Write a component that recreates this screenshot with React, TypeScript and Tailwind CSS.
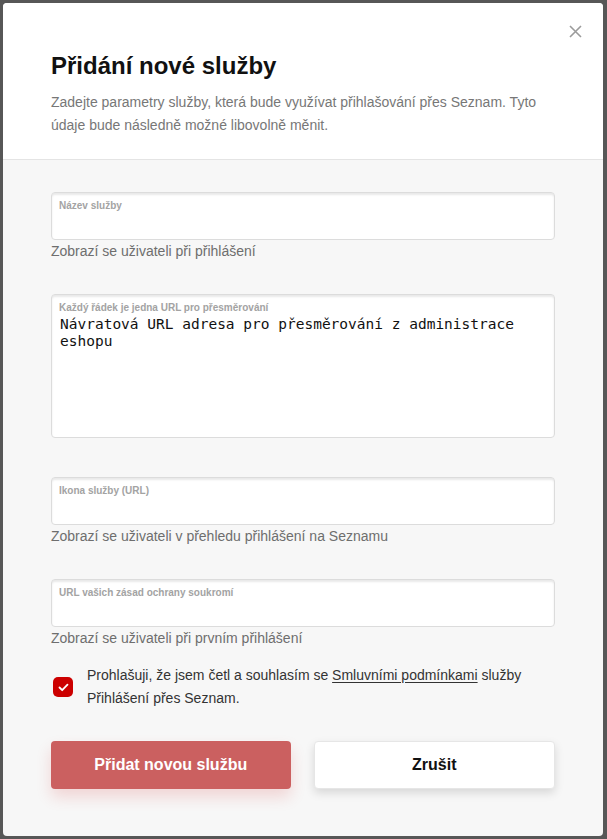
import React from "react";

const sans = "font-['Liberation_Sans',Arial,sans-serif]";

function Field({ label, helper }: { label: string; helper?: string }) {
  return (
    <div className="flex flex-col">
      <div className="h-[48px] rounded-[4px] border border-[#dcdcdc] bg-white px-[7px] pt-[6px] shadow-[inset_0_2px_2px_rgba(0,0,0,0.09)]">
        <div className="text-[10px] font-bold leading-[14px] text-[#a3a3a3]">{label}</div>
      </div>
      {helper && (
        <div className="mt-[1px] text-[14px] leading-[20px] text-[#6e6e6e]">{helper}</div>
      )}
    </div>
  );
}

export default function App() {
  return (
    <div className={`h-[839px] w-[607px] overflow-hidden bg-[#575757] pl-[3px] pt-[3px] ${sans}`}>
      <div className="flex h-[833px] w-[600px] flex-col overflow-hidden rounded-[4px] bg-[#f7f7f7]">
        {/* Header */}
        <div className="relative border-b border-[#e4e4e4] bg-white px-[48px] pt-[49px] pb-[22px]">
          <button className="absolute right-[19px] top-[19px] flex h-[18px] w-[18px] items-center justify-center">
            <svg width="13" height="13" viewBox="0 0 13 13">
              <path d="M1 1 L12 12 M12 1 L1 12" stroke="#9b9b9b" strokeWidth="1.6" fill="none" />
            </svg>
          </button>
          <h1 className="text-[24px] font-bold leading-[28px] text-[#111]">Přidání nové služby</h1>
          <p className="mt-[11px] text-[14px] leading-[23px] text-[#777]">
            Zadejte parametry služby, která bude využívat přihlašování přes Seznam. Tyto
            <br />
            údaje bude následně možné libovolně měnit.
          </p>
        </div>

        {/* Body */}
        <div className="flex flex-1 flex-col px-[48px] pt-[32px]">
          <Field label="Název služby" helper="Zobrazí se uživateli při přihlášení" />

          <div className="mt-[33px] h-[144px] rounded-[4px] border border-[#dcdcdc] bg-white px-[7px] pt-[6px] shadow-[inset_0_2px_2px_rgba(0,0,0,0.09)]">
            <div className="text-[10px] font-bold leading-[14px] text-[#a3a3a3]">
              Každý řádek je jedna URL pro přesměrování
            </div>
            <div className="mt-[1px] pl-[1px] font-['DejaVu_Sans_Mono','Liberation_Mono',monospace] text-[14.5px] leading-[17px] text-[#111]">
              Návratová URL adresa pro přesměrování z administrace
              <br />
              eshopu
            </div>
          </div>

          <div className="mt-[39px]">
            <Field label="Ikona služby (URL)" helper="Zobrazí se uživateli v přehledu přihlášení na Seznamu" />
          </div>

          <div className="mt-[33px]">
            <Field label="URL vašich zásad ochrany soukromí" helper="Zobrazí se uživateli při prvním přihlášení" />
          </div>

          <div className="mt-[16px] flex items-center gap-[14px] pl-[2px]">
            <div className="flex h-[20px] w-[20px] shrink-0 items-center justify-center rounded-[5px] bg-[#cc0000]">
              <svg width="11" height="9" viewBox="0 0 11 9">
                <path d="M1.5 4.5 L4.2 7.2 L9.5 1.6" stroke="#fff" strokeWidth="1.8" fill="none" strokeLinecap="round" strokeLinejoin="round" />
              </svg>
            </div>
            <p className="text-[14px] leading-[23px] text-[#333]">
              Prohlašuji, že jsem četl a souhlasím se{" "}
              <span className="underline underline-offset-[2px]">Smluvními podmínkami</span> služby
              <br />
              Přihlášení přes Seznam.
            </p>
          </div>

          <div className="mt-[31px] flex gap-[23px]">
            <button className="flex h-[48px] w-[240px] items-center justify-center rounded-[4px] bg-[#cb6060] text-[16px] font-bold text-white shadow-[0_8px_16px_rgba(204,0,0,0.14)]">
              Přidat novou službu
            </button>
            <button className="flex h-[48px] w-[242px] items-center justify-center rounded-[4px] border border-[#e6e6e6] bg-white text-[16px] font-bold text-[#111] shadow-[0_4px_10px_rgba(0,0,0,0.13)]">
              Zrušit
            </button>
          </div>
        </div>
      </div>
    </div>
  );
}
